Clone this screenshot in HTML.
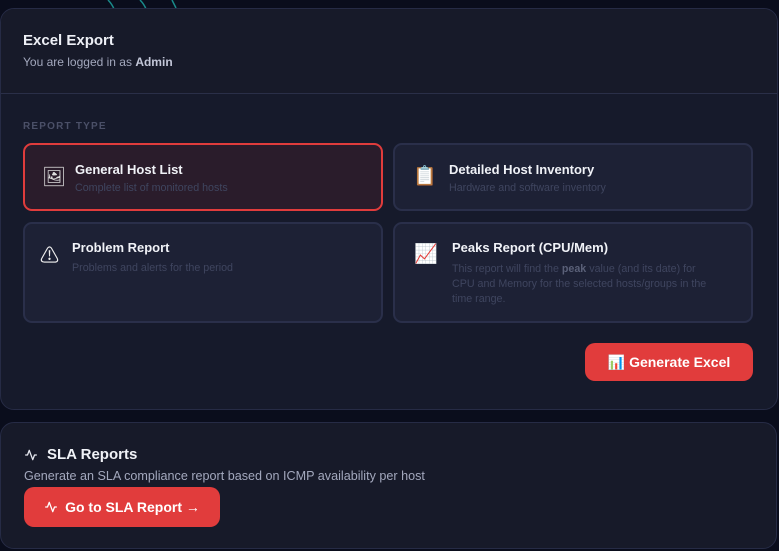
<!DOCTYPE html>
<html><head><meta charset="utf-8"><style>
*{box-sizing:border-box;margin:0;padding:0}
body{width:779px;height:551px;overflow:hidden;background:#0a0d1c;font-family:"Liberation Sans","Noto Sans CJK SC",sans-serif;position:relative}
.c1{position:absolute;left:0;top:8px;width:778px;height:402px;background:#161a2b;border:1px solid #262b45;border-radius:14px;overflow:hidden}
.hdr{height:85px;border-bottom:1px solid #2a2f48;background:#171a29;padding:23px 22px}
.hdr h1{font-size:15px;color:#eef0f6;font-weight:bold}
.hdr p{font-size:12px;color:#a3a8bd;margin-top:6px}
.hdr b{color:#c3c7d8}
.lbl{position:absolute;left:22px;top:112px;font-size:10px;letter-spacing:1.2px;color:#4b5068;font-weight:bold}
.card{position:absolute;background:#1d2135;border:2px solid #2a2f4a;border-radius:9px}
.card.sel{background:#2a1c2b;border-color:#e03c3c}
.ic{position:absolute;font-size:19px;line-height:20px}
.t{position:absolute;font-size:13px;font-weight:bold;color:#f0f2f7}
.d{position:absolute;font-size:10.7px;color:#3f455f;line-height:15px}
.d b{color:#5a6078}
.btn{position:absolute;background:#e13c3c;color:#fff;font-weight:bold;font-size:14px;border-radius:10px;display:flex;align-items:center;justify-content:center}
.c2{position:absolute;left:0;top:422px;width:777px;height:127px;background:#171a29;border:1px solid #262b45;border-radius:14px}
</style></head><body>
<svg style="position:absolute;left:100px;top:0" width="100" height="10"><path d="M8 0 Q12 4 14 9M40 0 Q44 4 46 9M72 0 L76 8" stroke="#1a8a8a" stroke-width="1.5" fill="none"/></svg>
<div class="c1">
<div class="hdr"><h1>Excel Export</h1><p>You are logged in as <b>Admin</b></p></div>
<div class="lbl">REPORT TYPE</div>
<div class="card sel" style="left:22px;top:134px;width:360px;height:68px">
<span class="ic" style="left:17px;top:23px;color:#ddd">🖼</span>
<div class="t" style="left:50px;top:17px">General Host List</div>
<div class="d" style="left:50px;top:36px">Complete list of monitored hosts</div></div>
<div class="card" style="left:392px;top:134px;width:360px;height:68px">
<span class="ic" style="left:18px;top:22px">📋</span>
<div class="t" style="left:54px;top:17px">Detailed Host Inventory</div>
<div class="d" style="left:54px;top:36px">Hardware and software inventory</div></div>
<div class="card" style="left:22px;top:213px;width:360px;height:101px">
<span class="ic" style="left:15px;top:23px;color:#eee">⚠</span>
<div class="t" style="left:47px;top:16px">Problem Report</div>
<div class="d" style="left:47px;top:37px">Problems and alerts for the period</div></div>
<div class="card" style="left:392px;top:213px;width:360px;height:101px">
<span class="ic" style="left:19px;top:21px">📈</span>
<div class="t" style="left:57px;top:16px">Peaks Report (CPU/Mem)</div>
<div class="d" style="left:57px;top:38px;width:300px;white-space:nowrap">This report will find the <b>peak</b> value (and its date) for<br>CPU and Memory for the selected hosts/groups in the<br>time range.</div></div>
<div class="btn" style="left:584px;top:334px;width:168px;height:38px">📊&nbsp;Generate Excel</div>
</div>
<div class="c2">
<svg style="position:absolute;left:23px;top:25px" width="14" height="14" viewBox="0 0 24 24"><path d="M2 12h4l3-8 6 16 3-8h4" stroke="#e8eaf2" stroke-width="2.2" fill="none" stroke-linejoin="round"/></svg>
<div class="t" style="left:46px;top:23px;font-size:15px">SLA Reports</div>
<div style="position:absolute;left:23px;top:46px;font-size:12.6px;color:#a3a8bd">Generate an SLA compliance report based on ICMP availability per host</div>
<div class="btn" style="left:23px;top:64px;width:196px;height:40px"><svg width="14" height="14" viewBox="0 0 24 24" style="margin-right:7px"><path d="M2 12h4l3-8 6 16 3-8h4" stroke="#fff" stroke-width="2.2" fill="none" stroke-linejoin="round"/></svg>Go to SLA Report →</div>
</div>
</body></html>
